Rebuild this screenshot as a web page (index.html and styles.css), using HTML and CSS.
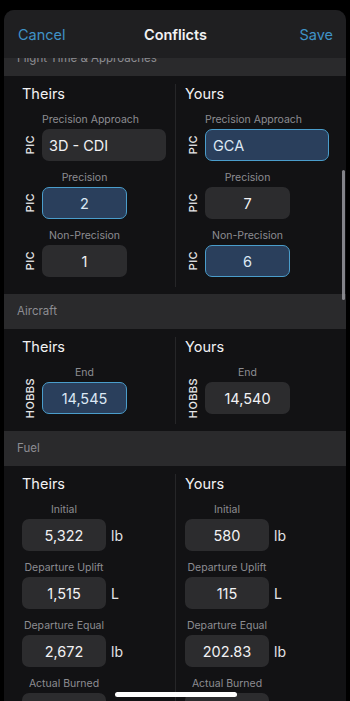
FILE: index.html
```html
<!DOCTYPE html>
<html lang="en">
<head>
    <meta charset="UTF-8">
    <meta name="viewport" content="width=device-width, initial-scale=1.0">
    <title>Conflicts</title>
    <link rel="stylesheet" href="styles.css">
</head>
<body>
    <div class="sheet">
        <header class="nav">
            <button class="nav-btn">Cancel</button>
            <h1 class="nav-title">Conflicts</h1>
            <button class="nav-btn save">Save</button>
        </header>

        <div class="scroll">
            <div class="scroll-content">
                <div class="section-header">Flight Time &amp; Approaches</div>
                <div class="compare">
                    <div class="side">
                        <h2>Theirs</h2>
                        <div class="entry">
                            <div class="entry-label left">Precision Approach</div>
                            <div class="tag"><span>PIC</span></div>
                            <div class="field wide">3D - CDI</div>
                        </div>
                        <div class="entry">
                            <div class="entry-label">Precision</div>
                            <div class="tag"><span>PIC</span></div>
                            <div class="field selected">2</div>
                        </div>
                        <div class="entry">
                            <div class="entry-label">Non-Precision</div>
                            <div class="tag"><span>PIC</span></div>
                            <div class="field">1</div>
                        </div>
                    </div>
                    <div class="side">
                        <h2>Yours</h2>
                        <div class="entry">
                            <div class="entry-label left">Precision Approach</div>
                            <div class="tag"><span>PIC</span></div>
                            <div class="field wide selected">GCA</div>
                        </div>
                        <div class="entry">
                            <div class="entry-label">Precision</div>
                            <div class="tag"><span>PIC</span></div>
                            <div class="field">7</div>
                        </div>
                        <div class="entry">
                            <div class="entry-label">Non-Precision</div>
                            <div class="tag"><span>PIC</span></div>
                            <div class="field selected">6</div>
                        </div>
                    </div>
                </div>

                <div class="section-header">Aircraft</div>
                <div class="compare">
                    <div class="side">
                        <h2>Theirs</h2>
                        <div class="entry">
                            <div class="entry-label">End</div>
                            <div class="tag"><span>HOBBS</span></div>
                            <div class="field selected">14,545</div>
                        </div>
                    </div>
                    <div class="side">
                        <h2>Yours</h2>
                        <div class="entry">
                            <div class="entry-label">End</div>
                            <div class="tag"><span>HOBBS</span></div>
                            <div class="field">14,540</div>
                        </div>
                    </div>
                </div>

                <div class="section-header">Fuel</div>
                <div class="compare">
                    <div class="side">
                        <h2>Theirs</h2>
                        <div class="entry unit-entry">
                            <div class="entry-label">Initial</div>
                            <div class="field">5,322</div>
                            <span class="unit">lb</span>
                        </div>
                        <div class="entry unit-entry">
                            <div class="entry-label">Departure Uplift</div>
                            <div class="field">1,515</div>
                            <span class="unit">L</span>
                        </div>
                        <div class="entry unit-entry">
                            <div class="entry-label">Departure Equal</div>
                            <div class="field">2,672</div>
                            <span class="unit">lb</span>
                        </div>
                        <div class="entry unit-entry">
                            <div class="entry-label">Actual Burned</div>
                            <div class="field">3,511</div>
                            <span class="unit">lb</span>
                        </div>
                    </div>
                    <div class="side">
                        <h2>Yours</h2>
                        <div class="entry unit-entry">
                            <div class="entry-label">Initial</div>
                            <div class="field">580</div>
                            <span class="unit">lb</span>
                        </div>
                        <div class="entry unit-entry">
                            <div class="entry-label">Departure Uplift</div>
                            <div class="field">115</div>
                            <span class="unit">L</span>
                        </div>
                        <div class="entry unit-entry">
                            <div class="entry-label">Departure Equal</div>
                            <div class="field">202.83</div>
                            <span class="unit">lb</span>
                        </div>
                        <div class="entry unit-entry">
                            <div class="entry-label">Actual Burned</div>
                            <div class="field">784</div>
                            <span class="unit">lb</span>
                        </div>
                    </div>
                </div>
            </div>
        </div>

        <div class="scroll-indicator"></div>
        <div class="home-indicator"></div>
    </div>
</body>
</html>
```

FILE: styles.css
```css
:root {
    --sheet: #121214;
    --nav: #1f1f21;
    --section: #2a2a2c;
    --field: #2c2c2e;
    --selected-bg: #2a3f5c;
    --selected-border: #4a9dcb;
    --tint: #3f92c6;
    --text: #f2f2f4;
    --muted: #8d8d92;
    --divider: #262628;
}

* {
    margin: 0;
    padding: 0;
    box-sizing: border-box;
    font-family: Inter, 'Noto Sans', sans-serif;
}

body {
    background-color: #000;
    color: var(--text);
}

.sheet {
    position: relative;
    margin: 10px 4px 0;
    height: 691px;
    background-color: var(--sheet);
    border-radius: 10px 10px 0 0;
    overflow: hidden;
}

.nav {
    display: grid;
    grid-template-columns: 1fr auto 1fr;
    align-items: center;
    height: 48px;
    padding: 0 13px 0 14px;
    background-color: var(--nav);
}

.nav-btn {
    justify-self: start;
    background: none;
    border: none;
    color: var(--tint);
    font-size: 14.5px;
}

.nav-btn.save {
    justify-self: end;
}

.nav-title {
    font-size: 14.5px;
    font-weight: 600;
}

.scroll {
    height: 643px;
    overflow: hidden;
}

/* list is scrolled a little, first header sits under the nav bar */
.scroll-content {
    margin-top: -17px;
}

.section-header {
    height: 35px;
    line-height: 35px;
    padding-left: 13px;
    background-color: var(--section);
    color: var(--muted);
    font-size: 11.5px;
}

.compare {
    display: grid;
    grid-template-columns: 171px 171px;
    padding: 8px 0 7px;
}

.side {
    padding-left: 18px;
}

.side + .side {
    padding-left: 9px;
    border-left: 1px solid var(--divider);
}

.side h2 {
    font-size: 14.5px;
    font-weight: 400;
    line-height: 20px;
    margin-bottom: 9px;
}

.entry {
    display: grid;
    grid-template-columns: 20px auto;
    justify-content: start;
    row-gap: 2px;
    margin-bottom: 10px;
}

.entry-label {
    grid-column: 2;
    margin: 0 -30px;
    line-height: 14px;
    font-size: 10.5px;
    white-space: nowrap;
    color: var(--muted);
    text-align: center;
}

.entry-label.left {
    margin: 0;
    text-align: left;
}

/* rotated label next to a field, may stick out above and below it */
.tag {
    grid-row: 2;
    grid-column: 1;
    display: flex;
    align-items: center;
    height: 32px;
    padding-left: 4px;
}

.tag span {
    writing-mode: vertical-rl;
    transform: rotate(180deg);
    font-size: 11px;
    font-weight: 500;
    line-height: 9px;
    letter-spacing: 0.4px;
    white-space: nowrap;
    color: #e6e6e8;
}

.field {
    grid-row: 2;
    grid-column: 2;
    display: flex;
    align-items: center;
    justify-content: center;
    width: 85px;
    height: 32px;
    border-radius: 7px;
    background-color: var(--field);
    font-size: 14.5px;
}

.field.wide {
    width: 124px;
    justify-content: flex-start;
    padding-left: 7px;
}

.field.selected {
    background-color: var(--selected-bg);
    border: 1.5px solid var(--selected-border);
    color: #dce8f4;
}

.unit-entry {
    grid-template-columns: 84px auto;
    column-gap: 5px;
}

.unit-entry .entry-label {
    grid-column: 1;
}

.unit-entry .field {
    grid-column: 1;
    width: 84px;
}

.unit {
    grid-row: 2;
    grid-column: 2;
    align-self: center;
    font-size: 14px;
    color: #e4e4e6;
}

.scroll-indicator {
    position: absolute;
    top: 160px;
    right: 1px;
    width: 3px;
    height: 130px;
    border-radius: 2px;
    background-color: rgba(160, 160, 166, 0.8);
}

.home-indicator {
    position: absolute;
    top: 682px;
    left: 111px;
    width: 122px;
    height: 5px;
    border-radius: 3px;
    background-color: #fff;
}
```
